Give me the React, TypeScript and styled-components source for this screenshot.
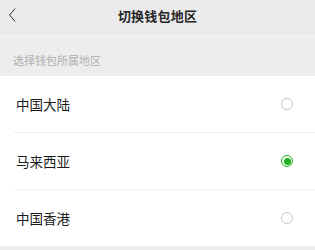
import React, { useState } from "react";
import styled, { createGlobalStyle } from "styled-components";

const Global = createGlobalStyle`
  html, body { margin: 0; padding: 0; background: #ededed; }
  body { font-family: "Noto Sans CJK SC", "Noto Sans", sans-serif; -webkit-font-smoothing: antialiased; }
`;

const Page = styled.div`
  width: 315px;
  height: 250px;
  background: #ededed;
  display: flex;
  flex-direction: column;
  overflow: hidden;
`;

const Header = styled.div`
  height: 32px;
  display: flex;
  align-items: center;
  justify-content: center;
  position: relative;
  background: #ebebeb;
  border-bottom: 1px solid #e6e6e6;
`;

const Back = styled.div`
  position: absolute;
  left: 8px;
  top: 7px;
  width: 10px;
  height: 16px;
  display: flex;
`;

const Title = styled.div`
  font-size: 13px;
  font-weight: 600;
  color: #262626;
  letter-spacing: 0.2px;
  margin-top: -2px;
`;

const Caption = styled.div`
  height: 43px;
  box-sizing: border-box;
  padding-left: 13px;
  padding-bottom: 8px;
  display: flex;
  align-items: flex-end;
  font-size: 11px;
  line-height: 16px;
  color: #b0b0b0;
`;

const List = styled.div`
  background: #fff;
  display: flex;
  flex-direction: column;
`;

const Row = styled.div<{ $last?: boolean }>`
  height: 56px;
  display: flex;
  align-items: center;
  justify-content: space-between;
  margin-left: 13px;
  padding-left: 3px;
  padding-right: 22px;
  border-bottom: ${(p) => (p.$last ? "none" : "1px solid #f0f0f0")};
  cursor: pointer;
`;

const Label = styled.div`
  font-size: 13.5px;
  color: #1a1a1a;
`;

const Radio = styled.div<{ $on?: boolean }>`
  width: 12px;
  height: 12px;
  border-radius: 50%;
  box-sizing: border-box;
  border: 1px solid ${(p) => (p.$on ? "#1db21d" : "#c8c8c8")};
  display: flex;
  align-items: center;
  justify-content: center;
  &::after {
    content: "";
    width: 7px;
    height: 7px;
    border-radius: 50%;
    background: ${(p) => (p.$on ? "#1db21d" : "transparent")};
  }
`;

const regions = ["中国大陆", "马来西亚", "中国香港"];

export default function App() {
  const [sel, setSel] = useState(1);
  return (
    <Page>
      <Global />
      <Header>
        <Back>
          <svg width="10" height="16" viewBox="0 0 10 16">
            <path d="M7.2 1.5 L1.6 8 L7.2 14.5" fill="none" stroke="#333" strokeWidth="1" />
          </svg>
        </Back>
        <Title>切换钱包地区</Title>
      </Header>
      <Caption>选择钱包所属地区</Caption>
      <List>
        {regions.map((r, i) => (
          <Row key={r} $last={i === regions.length - 1} onClick={() => setSel(i)}>
            <Label>{r}</Label>
            <Radio $on={sel === i} />
          </Row>
        ))}
      </List>
    </Page>
  );
}
